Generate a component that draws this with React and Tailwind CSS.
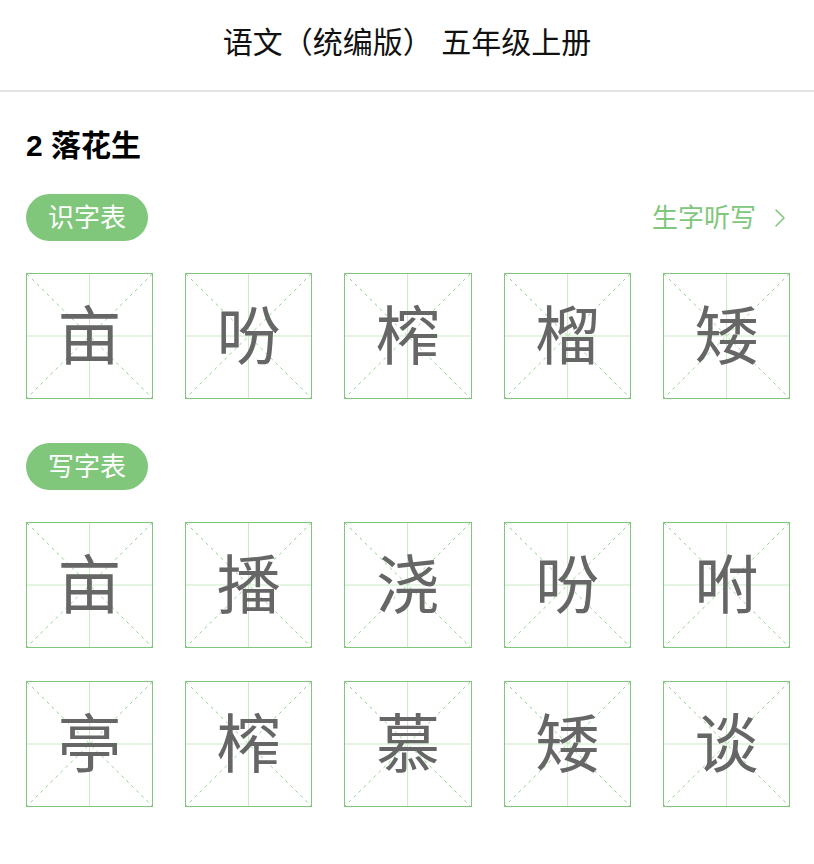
import React from "react";

const row1 = ["亩", "吩", "榨", "榴", "矮"];
const row2 = ["亩", "播", "浇", "吩", "咐", "亭", "榨", "慕", "矮", "谈"];

function Cell({ ch }) {
  return (
    <div className="relative h-[126px] border border-[#7fc77a] flex items-center justify-center">
      <svg className="absolute inset-0 w-full h-full" viewBox="0 0 100 100" preserveAspectRatio="none">
        <line x1="50" y1="0" x2="50" y2="100" stroke="#c9e8c6" strokeWidth="1" vectorEffect="non-scaling-stroke" />
        <line x1="0" y1="50" x2="100" y2="50" stroke="#c9e8c6" strokeWidth="1" vectorEffect="non-scaling-stroke" />
        <line x1="0" y1="0" x2="100" y2="100" stroke="#8fd18a" strokeWidth="1" strokeDasharray="3 4" vectorEffect="non-scaling-stroke" />
        <line x1="100" y1="0" x2="0" y2="100" stroke="#8fd18a" strokeWidth="1" strokeDasharray="3 4" vectorEffect="non-scaling-stroke" />
      </svg>
      <span className="relative -translate-y-[5px] text-[64px] leading-none text-[#666666] font-['Noto_Sans_CJK_SC',sans-serif]">{ch}</span>
    </div>
  );
}

function Pill({ children }) {
  return (
    <div className="h-[47px] w-[122px] rounded-full bg-[#80c77c] flex items-center justify-center text-white text-[26px] leading-none">
      {children}
    </div>
  );
}

export default function App() {
  return (
    <div className="w-[814px] min-h-[864px] bg-white font-['Liberation_Sans','Noto_Sans_CJK_SC',sans-serif]">
      <div className="h-[92px] pb-[6px] flex items-center justify-center text-[30px] text-[#111] border-b-2 border-[#e3e3e3]">
        语文（统编版） 五年级上册
      </div>
      <div className="pl-[26px] pr-[24px]">
        <div className="pt-[32px] text-[30px] font-bold text-black leading-[44px]">2 落花生</div>
        <div className="mt-[26px] flex items-center justify-between">
          <Pill>识字表</Pill>
          <div className="flex items-center text-[#80c77c] text-[26px] leading-none">
            <span>生字听写</span>
            <svg className="ml-[18px] mr-[4px]" width="12" height="20" viewBox="0 0 12 20" fill="none">
              <path d="M2 2 L10 10 L2 18" stroke="#80c77c" strokeWidth="1.6" strokeLinecap="round" strokeLinejoin="round" />
            </svg>
          </div>
        </div>
        <div className="mt-[32px] grid grid-cols-5 gap-x-[32px]">
          {row1.map((c, i) => (
            <Cell key={i} ch={c} />
          ))}
        </div>
        <div className="mt-[44px]">
          <Pill>写字表</Pill>
        </div>
        <div className="mt-[32px] grid grid-cols-5 gap-x-[32px] gap-y-[33px]">
          {row2.map((c, i) => (
            <Cell key={i} ch={c} />
          ))}
        </div>
      </div>
    </div>
  );
}
